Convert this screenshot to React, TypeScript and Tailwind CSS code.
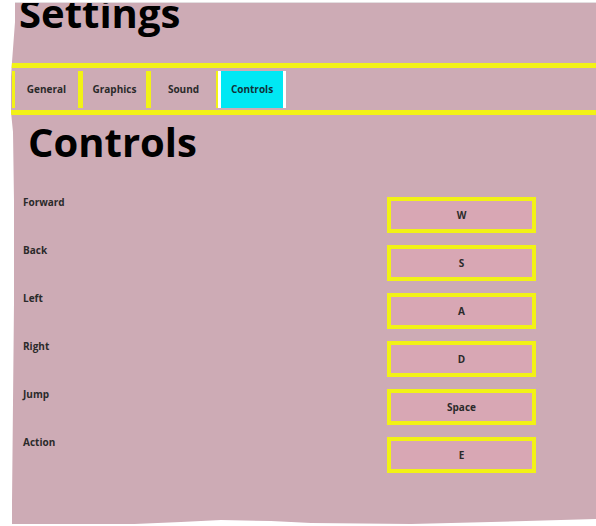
import React from "react";

const bindings = [
  { action: "Forward", key: "W" },
  { action: "Back", key: "S" },
  { action: "Left", key: "A" },
  { action: "Right", key: "D" },
  { action: "Jump", key: "Space" },
  { action: "Action", key: "E" },
];

const App: React.FC = () => {
  return (
    <div className="w-[596px] h-[526px] bg-white overflow-hidden font-['Open_Sans',sans-serif]">
      {/* Torn paper panel */}
      <div className="ml-[11px] mt-[2px] w-[585px] h-[522px] bg-[#cdabb5] border-t border-[#e4dfe1] overflow-hidden [clip-path:polygon(4px_0,585px_0,585px_517px,480px_520px,400px_522px,300px_521px,260px_519px,210px_518px,170px_520px,100px_523px,1px_523px,1px_500px,2px_400px,3px_300px,3px_200px,2px_130px,0_110px,0_75px,1px_60px,4px_20px)]">
        <h1 className="pl-[8px] -mt-[10px] text-[40px] leading-[40px] font-bold text-black">
          Settings
        </h1>

        {/* Tab bar */}
        <div className="mt-[30px] h-[52px] border-y-[5px] border-[#f2f216] flex pl-[1px] text-[10px] font-bold text-[#2a2a2a]">
          <button className="mt-[3px] h-[37px] w-[66px] border-l-[3px] border-[#f2f216] flex items-center justify-center">
            General
          </button>
          <button className="mt-[3px] h-[37px] w-[68px] border-l-[5px] border-[#f2f216] flex items-center justify-center">
            Graphics
          </button>
          <button className="mt-[3px] h-[37px] w-[70px] border-l-[5px] border-[#f2f216] flex items-center justify-center">
            Sound
          </button>
          <div className="mt-[3px] h-[37px] w-[70px] border-l-[2px] border-[#f2f216] flex">
            <button className="flex-1 border-x-[3px] border-white bg-[#00e8f4] text-[#10323a] flex items-center justify-center">
              Controls
            </button>
          </div>
        </div>

        <h2 className="pl-[17px] mt-[7px] text-[40px] leading-[40px] font-bold text-black">
          Controls
        </h2>

        {/* Key bindings */}
        <div className="mt-[35px] pl-[12px] flex flex-col gap-3">
          {bindings.map((b) => (
            <div key={b.action} className="flex">
              <div className="w-[364px] text-[10px] leading-[10px] font-bold text-[#2a2a2a]">
                {b.action}
              </div>
              <button className="w-[149px] h-[36px] border-4 border-[#f2f216] bg-[#d8a7b4] text-[10px] font-bold text-[#2a2a2a] flex items-center justify-center">
                {b.key}
              </button>
            </div>
          ))}
        </div>
      </div>
    </div>
  );
};

export default App;
